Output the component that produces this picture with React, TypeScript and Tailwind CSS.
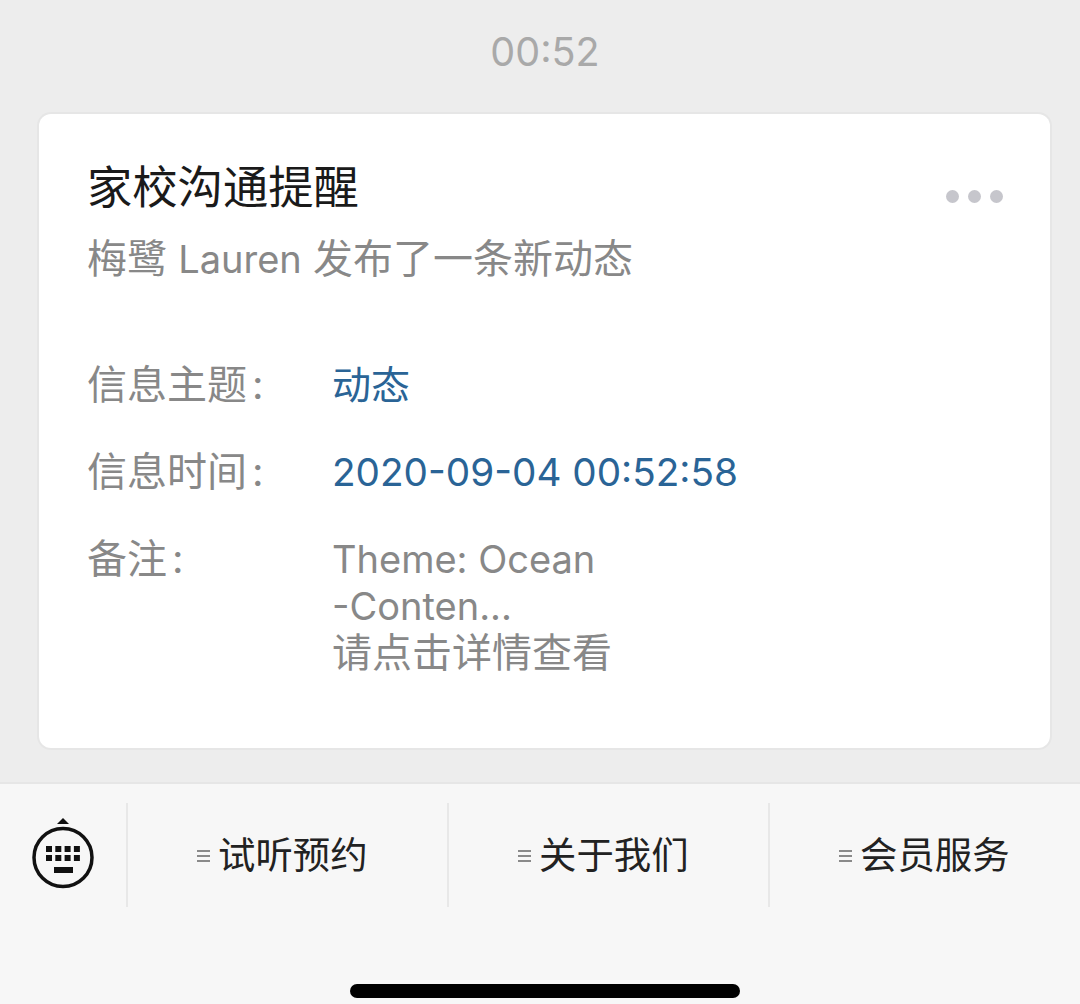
const cjk = "font-['Inter','Noto_Sans_CJK_SC',sans-serif]";

const rows = [
  { label: "信息主题", value: "动态", size: "text-[39px]" },
  { label: "信息时间", value: "2020-09-04 00:52:58", size: "text-[38.7px]" },
];

function KeyboardIcon() {
  return (
    <svg width="63" height="71" viewBox="0 0 63 71" fill="none">
      <path d="M25 6 L31 0 L37 6 Z" fill="#111" />
      <circle cx="31" cy="39.5" r="29" stroke="#111" strokeWidth="3.5" />
      {[14, 23.3, 32.6, 41.9].map((x) => (
        <g key={x} fill="#111">
          <rect x={x} y="28" width="6" height="6" />
          <rect x={x} y="37" width="6" height="6" />
        </g>
      ))}
      <rect x="22" y="49" width="19" height="6" fill="#111" />
    </svg>
  );
}

function MenuTab({ label, width }: { label: string; width: string }) {
  return (
    <div className={`${width} h-[104px] border-l-2 border-[#e8e8e8] flex items-center pl-[69px]`}>
      <span className="flex flex-col gap-[3px] mr-[8px] mt-[1px]">
        <span className="block w-[13px] h-[2px] bg-[#8a8a8a]"></span>
        <span className="block w-[13px] h-[2px] bg-[#8a8a8a]"></span>
        <span className="block w-[13px] h-[2px] bg-[#8a8a8a]"></span>
      </span>
      <span className="text-[37.4px] leading-[44px] mt-[2px] text-[#222]">{label}</span>
    </div>
  );
}

export default function App() {
  return (
    <div className={`w-[1080px] h-[1004px] bg-[#ededed] flex flex-col overflow-hidden ${cjk}`}>
      <div className="h-[114px] pt-[30px] pl-[10px] text-center text-[39.5px] leading-[45px] text-[#a9a9a9]">00:52</div>

      <div className="ml-[39px] w-[1011px] h-[634px] bg-white rounded-[12px] shadow-[0_0_0_2px_#e6e6e6] pt-[48px] pl-[48px] pr-[47px]">
        <div className="flex justify-between items-start h-[52px]">
          <h1 className="text-[45.3px] leading-[52px] text-[#1a1a1a]">家校沟通提醒</h1>
          <div className="flex gap-[9px] mt-[28px]">
            <span className="w-[13px] h-[13px] rounded-full bg-[#c6c6cc]"></span>
            <span className="w-[13px] h-[13px] rounded-full bg-[#c6c6cc]"></span>
            <span className="w-[13px] h-[13px] rounded-full bg-[#c6c6cc]"></span>
          </div>
        </div>
        <p className="mt-[21px] text-[40px] leading-[48px] text-[#888]">
          梅鹭 <span className="text-[38px]">Lauren</span> 发布了一条新动态
        </p>

        <div className="mt-[78px] flex flex-col gap-[39px] text-[40px] leading-[48px]">
          {rows.map((row) => (
            <div key={row.label} className="flex h-[48px]">
              <span className="w-[245px] text-[#888]">
                {row.label}
                <span className="ml-[5px]">:</span>
              </span>
              <span className={`${row.size} text-[#2a6496]`}>{row.value}</span>
            </div>
          ))}
          <div className="flex">
            <span className="w-[245px] text-[#888]">
              备注<span className="ml-[5px]">:</span>
            </span>
            <div className="text-[#888] pt-[1px]">
              <div className="text-[38px] leading-[47px]">Theme: Ocean</div>
              <div className="text-[38px] leading-[47px]">-Conten...</div>
              <div className="leading-[45px]">请点击详情查看</div>
            </div>
          </div>
        </div>
      </div>

      <div className="mt-[34px] flex-1 bg-[#f7f7f7] border-t-2 border-[#e6e6e6] flex flex-col">
        <div className="flex pt-[19px]">
          <div className="w-[126px] h-[104px] pl-[32px] pt-[15px]">
            <KeyboardIcon />
          </div>
          <MenuTab label="试听预约" width="w-[321px]" />
          <MenuTab label="关于我们" width="w-[321px]" />
          <MenuTab label="会员服务" width="w-[312px]" />
        </div>
        <div className="mt-[77px] ml-[350px] w-[390px] h-[14px] rounded-full bg-black"></div>
      </div>
    </div>
  );
}
